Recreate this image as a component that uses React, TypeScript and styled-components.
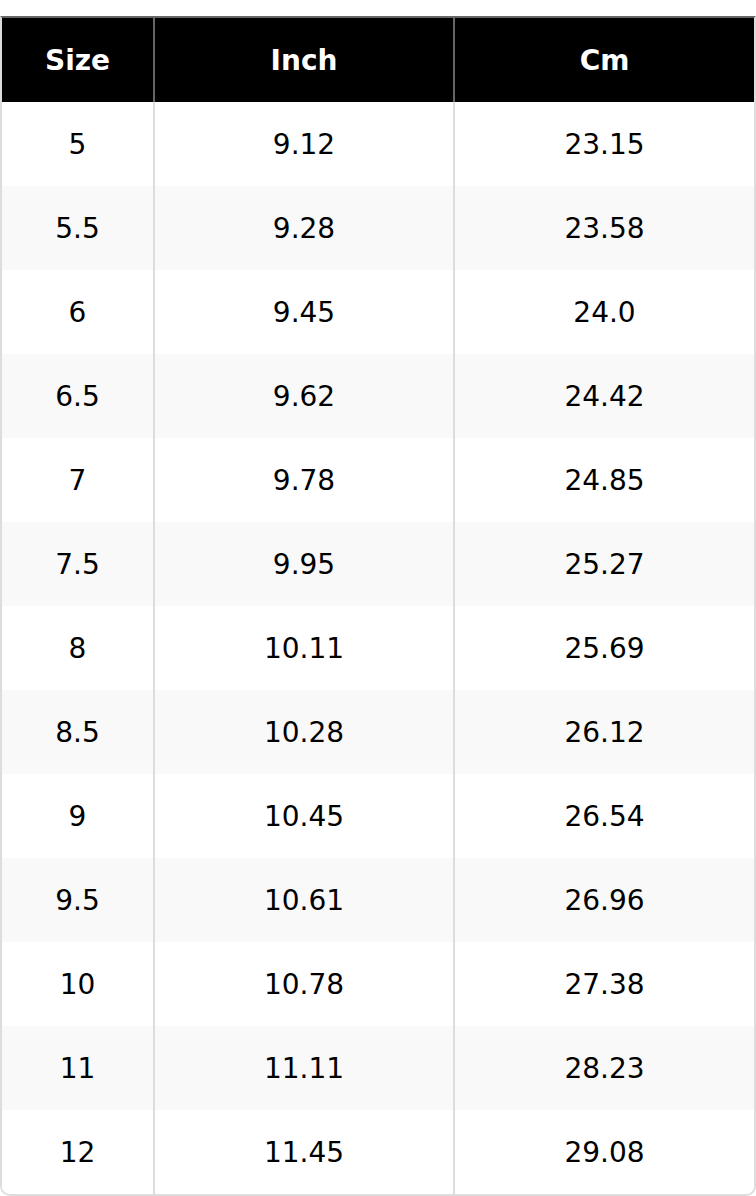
import React from "react";
import styled, { createGlobalStyle } from "styled-components";

const Global = createGlobalStyle`
  html, body { margin: 0; padding: 0; background: #fff; }
  body { font-family: "DejaVu Sans", "Liberation Sans", sans-serif; }
`;

const Wrap = styled.div`
  padding-top: 16px;
  width: 756px;
`;

const Table = styled.table`
  width: 756px;
  border-collapse: separate;
  border-spacing: 0;
  table-layout: fixed;
  border: 2px solid #dddddd;
  border-top-color: #666666;
  border-radius: 0 0 10px 10px;
  overflow: hidden;
  box-sizing: border-box;
`;

const Th = styled.th<{ $last?: boolean }>`
  height: 84px;
  padding: 0;
  background: #000;
  color: #fff;
  font-weight: bold;
  font-size: 28px;
  text-align: center;
  border-right: ${(p) => (p.$last ? "none" : "2px solid #666666")};
`;

const Tr = styled.tr<{ $striped: boolean }>`
  background: ${(p) => (p.$striped ? "#f9f9f9" : "#ffffff")};
`;

const Td = styled.td<{ $last?: boolean }>`
  height: 84px;
  padding: 0;
  font-size: 28px;
  color: #000;
  text-align: center;
  border-right: ${(p) => (p.$last ? "none" : "2px solid #dddddd")};
`;

const rows: [string, string, string][] = [
  ["5", "9.12", "23.15"],
  ["5.5", "9.28", "23.58"],
  ["6", "9.45", "24.0"],
  ["6.5", "9.62", "24.42"],
  ["7", "9.78", "24.85"],
  ["7.5", "9.95", "25.27"],
  ["8", "10.11", "25.69"],
  ["8.5", "10.28", "26.12"],
  ["9", "10.45", "26.54"],
  ["9.5", "10.61", "26.96"],
  ["10", "10.78", "27.38"],
  ["11", "11.11", "28.23"],
  ["12", "11.45", "29.08"],
];

export default function App() {
  return (
    <Wrap>
      <Global />
      <Table>
        <colgroup>
          <col style={{ width: 153 }} />
          <col style={{ width: 300 }} />
          <col />
        </colgroup>
        <thead>
          <tr>
            <Th>Size</Th>
            <Th>Inch</Th>
            <Th $last>Cm</Th>
          </tr>
        </thead>
        <tbody>
          {rows.map((r, i) => (
            <Tr key={r[0]} $striped={i % 2 === 1}>
              <Td>{r[0]}</Td>
              <Td>{r[1]}</Td>
              <Td $last>{r[2]}</Td>
            </Tr>
          ))}
        </tbody>
      </Table>
    </Wrap>
  );
}
